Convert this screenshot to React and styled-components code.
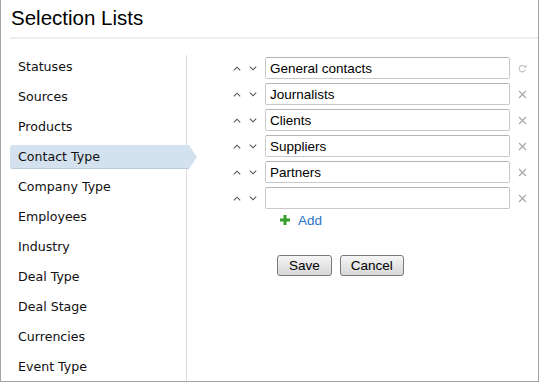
import styled, { createGlobalStyle } from 'styled-components';

const GlobalStyle = createGlobalStyle`
  html, body {
    margin: 0;
    padding: 0;
    background: #fff;
  }
  body {
    font-family: "Liberation Sans", Arial, sans-serif;
  }
`;

const Frame = styled.div`
  box-sizing: border-box;
  width: 539px;
  height: 382px;
  border: 1px solid #a3a3a3;
  border-top: none;
  overflow: hidden;
  display: flex;
  flex-direction: column;
`;

const Header = styled.div`
  margin-left: 9px;
  height: 37px;
  border-bottom: 2px solid #eeeeee;
  box-sizing: content-box;
`;

const Title = styled.h1`
  margin: 0;
  padding: 6px 0 0 1px;
  font-family: "Liberation Sans", Arial, sans-serif;
  font-weight: normal;
  font-size: 20.5px;
  line-height: 24px;
  color: #000;
`;

const Body = styled.div`
  display: flex;
  flex: 1;
  padding-top: 16px;
`;

const Sidebar = styled.ul`
  list-style: none;
  margin: 0 0 0 9px;
  padding: 0;
  width: 176px;
  border-right: 1px solid #dcdcdc;
  display: flex;
  flex-direction: column;
  gap: 6px;
`;

const Item = styled.li`
  position: relative;
  height: 24px;
  line-height: 24px;
  padding-left: 8px;
  font-family: "DejaVu Sans", Verdana, sans-serif;
  font-size: 12.6px;
  color: #111;
  border-radius: 3px 0 0 3px;
  margin-right: ${(p) => (p.$active ? '-3px' : '0')};
  background: ${(p) => (p.$active ? '#d4e1ee' : 'transparent')};
  box-shadow: ${(p) => (p.$active ? 'inset 0 -1px 0 #bccbdb' : 'none')};

  &::after {
    content: '';
    display: ${(p) => (p.$active ? 'block' : 'none')};
    position: absolute;
    top: 0;
    right: -8px;
    width: 0;
    height: 0;
    border-top: 12px solid transparent;
    border-bottom: 12px solid transparent;
    border-left: 8px solid #d4e1ee;
  }
`;

const Panel = styled.div`
  flex: 1;
  padding: 2px 0 0 46px;
  display: flex;
  flex-direction: column;
`;

const Rows = styled.div`
  display: flex;
  flex-direction: column;
  gap: 4px;
`;

const Row = styled.div`
  display: flex;
  align-items: center;
  height: 22px;
`;

const MoveButton = styled.span`
  width: 8px;
  height: 22px;
  margin-right: 8px;
  display: flex;
  align-items: center;
  justify-content: center;
  color: #555;
`;

const Field = styled.input`
  box-sizing: border-box;
  width: 245px;
  height: 22px;
  border: 1px solid #c9c9c9;
  border-top-color: #b5b5b5;
  border-radius: 2px;
  padding: 0 4px;
  font-family: "Liberation Sans", Arial, sans-serif;
  font-size: 13.5px;
  color: #000;
  outline: none;
  background: #fff;
`;

const RowAction = styled.span`
  margin-left: 8px;
  width: 9px;
  height: 22px;
  display: flex;
  align-items: center;
  justify-content: center;
  color: ${(p) => (p.$light ? '#c0c0c0' : '#a8a8a8')};
`;

const AddLink = styled.a`
  display: flex;
  align-items: center;
  gap: 8px;
  margin: 0 0 0 47px;
  height: 22px;
  font-size: 13.5px;
  color: #2a74c6;
  text-decoration: none;
  cursor: pointer;
`;

const Buttons = styled.div`
  display: flex;
  gap: 8px;
  margin: 24px 0 0 44px;
`;

const Button = styled.button`
  box-sizing: border-box;
  height: 21px;
  padding: 0 ${(p) => p.$pad}px;
  border: 1px solid #7a7a7a;
  border-radius: 3px;
  background: linear-gradient(#f6f6f6, #e6e6e6 50%, #d8d8d8);
  font-family: "Liberation Sans", Arial, sans-serif;
  font-size: 13.5px;
  color: #000;
  cursor: pointer;
`;

const Up = () => (
  <svg width="8" height="5" viewBox="0 0 8 5">
    <path d="M0.8 4.3 L4 1.2 L7.2 4.3" fill="none" stroke="currentColor" strokeWidth="1.1" />
  </svg>
);

const Down = () => (
  <svg width="8" height="5" viewBox="0 0 8 5">
    <path d="M0.8 0.7 L4 3.8 L7.2 0.7" fill="none" stroke="currentColor" strokeWidth="1.1" />
  </svg>
);

const Cross = () => (
  <svg width="9" height="9" viewBox="0 0 9 9">
    <path d="M1 1 L8 8 M8 1 L1 8" stroke="currentColor" strokeWidth="1.2" />
  </svg>
);

const Refresh = () => (
  <svg width="9" height="9" viewBox="0 0 9 9">
    <path d="M7.2 3.2 A3.2 3.2 0 1 0 7.4 5.6" fill="none" stroke="currentColor" strokeWidth="1.1" />
    <path d="M5.6 3.6 L8.6 3.6 L8.6 0.8 Z" fill="currentColor" />
  </svg>
);

const Plus = () => (
  <svg width="10" height="10" viewBox="0 0 10 10">
    <path d="M3.5 0 H6.5 V3.5 H10 V6.5 H6.5 V10 H3.5 V6.5 H0 V3.5 H3.5 Z" fill="#35a02a" />
  </svg>
);

const lists = [
  'Statuses',
  'Sources',
  'Products',
  'Contact Type',
  'Company Type',
  'Employees',
  'Industry',
  'Deal Type',
  'Deal Stage',
  'Currencies',
  'Event Type',
];

const values = ['General contacts', 'Journalists', 'Clients', 'Suppliers', 'Partners', ''];

export default function App() {
  return (
    <>
      <GlobalStyle />
      <Frame>
        <Header>
          <Title>Selection Lists</Title>
        </Header>
        <Body>
          <Sidebar>
            {lists.map((name) => (
              <Item key={name} $active={name === 'Contact Type'}>
                {name}
              </Item>
            ))}
          </Sidebar>
          <Panel>
            <Rows>
              {values.map((value, i) => (
                <Row key={i}>
                  <MoveButton>
                    <Up />
                  </MoveButton>
                  <MoveButton>
                    <Down />
                  </MoveButton>
                  <Field defaultValue={value} />
                  <RowAction $light={i === 0}>{i === 0 ? <Refresh /> : <Cross />}</RowAction>
                </Row>
              ))}
            </Rows>
            <AddLink>
              <Plus />
              Add
            </AddLink>
            <Buttons>
              <Button $pad={11}>Save</Button>
              <Button $pad={10}>Cancel</Button>
            </Buttons>
          </Panel>
        </Body>
      </Frame>
    </>
  );
}
